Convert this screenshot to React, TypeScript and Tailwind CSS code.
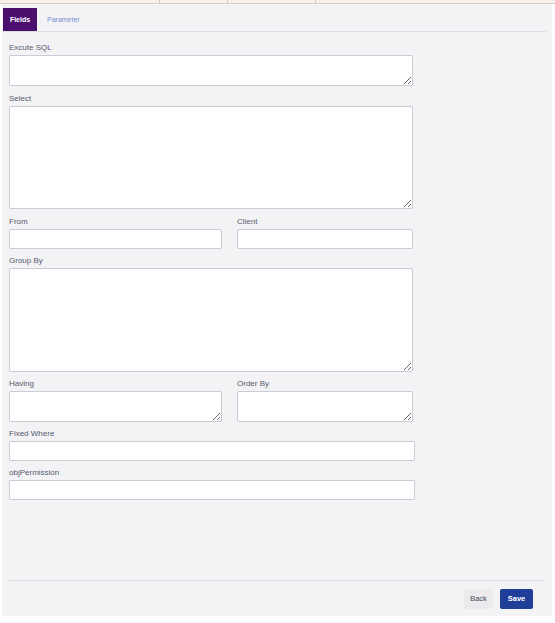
import React from "react";

const label = "block text-[8px] leading-[10px] pt-[1px] text-[#555a6e] mb-[2px] whitespace-nowrap";
const box = "block bg-white border border-[#c9ccd4] rounded-[2px] outline-none";

export default function App() {
  return (
    <div className="w-[555px] h-[623px] bg-white relative overflow-hidden" style={{ fontFamily: '"Liberation Sans", Arial, sans-serif' }}>
      <div className="h-[4px] w-full bg-[#f7f0ea] border-b border-[#d4d0cd] flex">
        <div className="w-[160px] border-r border-[#cfcac6]" />
        <div className="w-[68px] border-r border-[#cfcac6]" />
        <div className="w-[88px] border-r border-[#cfcac6]" />
      </div>
      <div className="ml-[2px] w-[550px] h-[612px] bg-[#f3f3f5] flex flex-col">
        <div className="mt-[4px] ml-[1px] mr-[6px] flex items-end border-b border-[#dcdce0] h-[24px]">
          <div className="w-[34px] h-[23px] pt-[1px] bg-[#4b0f6e] text-white font-bold text-[7px] flex items-center justify-center">Fields</div>
          <div className="ml-[10px] h-[23px] pt-[1px] text-[#7d8fd3] text-[7px] flex items-center">Parameter</div>
        </div>
        <div className="pl-[7px] flex flex-col">
          <div className="mt-[10px]">
            <span className={label}>Excute SQL</span>
            <textarea className={box + " w-[404px] h-[31px]"} />
          </div>
          <div className="mt-[7px]">
            <span className={label}>Select</span>
            <textarea className={box + " w-[404px] h-[103px]"} />
          </div>
          <div className="mt-[7px] flex gap-[15px]">
            <div>
              <span className={label}>From</span>
              <input className={box + " w-[213px] h-[20px]"} />
            </div>
            <div>
              <span className={label}>Client</span>
              <input className={box + " w-[176px] h-[20px]"} />
            </div>
          </div>
          <div className="mt-[6px]">
            <span className={label}>Group By</span>
            <textarea className={box + " w-[404px] h-[104px]"} />
          </div>
          <div className="mt-[6px] flex gap-[15px]">
            <div>
              <span className={label}>Having</span>
              <textarea className={box + " w-[213px] h-[31px]"} />
            </div>
            <div>
              <span className={label}>Order By</span>
              <textarea className={box + " w-[176px] h-[31px]"} />
            </div>
          </div>
          <div className="mt-[6px]">
            <span className={label}>Fixed Where</span>
            <input className={box + " w-[406px] h-[20px]"} />
          </div>
          <div className="mt-[6px]">
            <span className={label}>objPermission</span>
            <input className={box + " w-[406px] h-[20px]"} />
          </div>
        </div>
        <div className="mt-auto mx-[7px] border-t border-[#d8d8dc]" />
        <div className="flex justify-end gap-[7px] pr-[19px] pt-[8px] pb-[7px]">
          <button className="w-[29px] h-[20px] bg-[#ebebed] text-[#4a4a55] text-[7.5px] rounded-[2px]">Back</button>
          <button className="w-[33px] h-[20px] bg-[#1f3e98] text-white font-bold text-[7.5px] rounded-[2px]">Save</button>
        </div>
      </div>
    </div>
  );
}
